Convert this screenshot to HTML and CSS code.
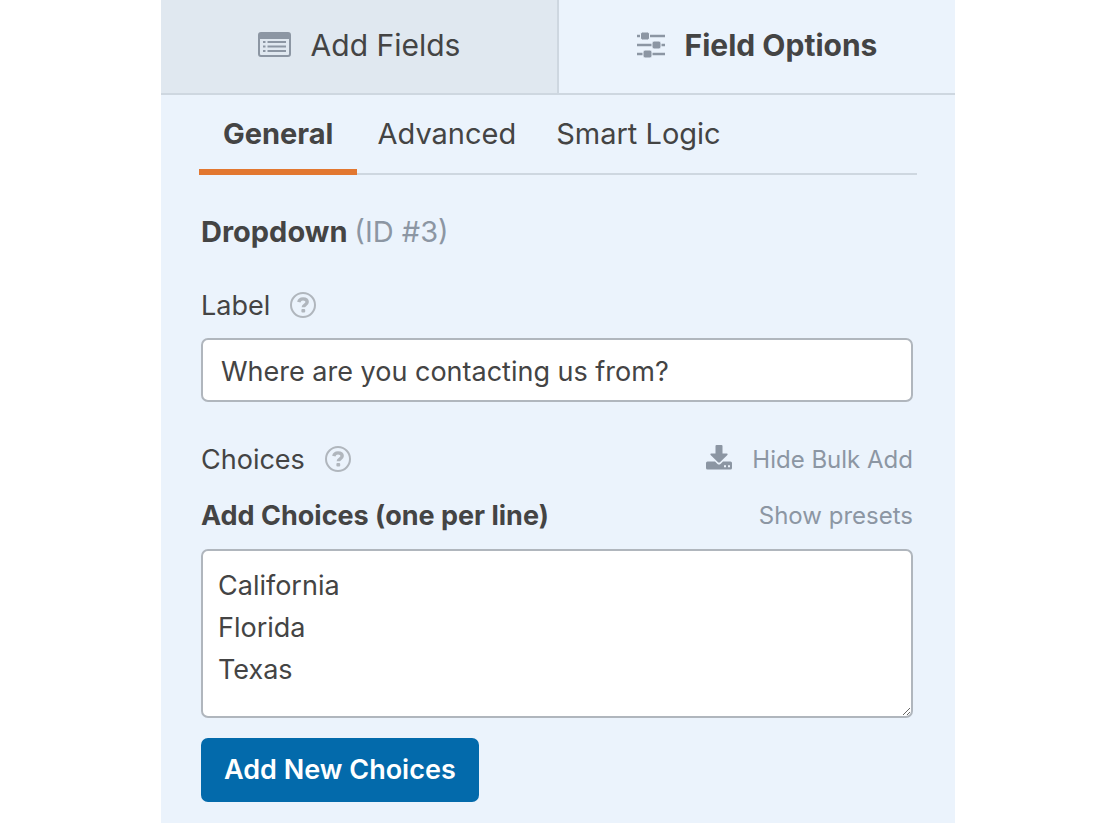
FILE: index.html
```html
<!DOCTYPE html>
<html lang="en">
<head>
<meta charset="utf-8">
<meta name="viewport" content="width=device-width, initial-scale=1">
<title>Field Options</title>
<link rel="stylesheet" href="styles.css">
</head>
<body>
<div class="panel">
  <nav class="tabs">
    <a class="tab" href="#add-fields">
      <svg class="tab-icon" width="33" height="26" viewBox="0 0 33 26">
        <rect x="1" y="1" width="31" height="23" rx="2" fill="none" stroke="#8c96a3" stroke-width="2"/>
        <path d="M1 2h31v5H1z" fill="#8c96a3"/>
        <path d="M5 10h2.500M5 14.500h2.500M5 19h2.500M9.500 10H28M9.500 14.500H28M9.500 19H28" stroke="#8c96a3" stroke-width="2.200"/>
      </svg>
      Add Fields
    </a>
    <a class="tab active" href="#field-options">
      <svg class="tab-icon" width="28" height="28" viewBox="0 0 28 28">
        <path d="M0 5h28M0 14h28M0 23h28" stroke="#8c96a3" stroke-width="2.400"/>
        <g fill="#8c96a3" stroke="#ebf3fc">
          <rect x="3.500" y="1" width="9" height="8" rx="2"/>
          <rect x="15" y="10" width="9" height="8" rx="2"/>
          <rect x="6" y="19" width="9" height="8" rx="2"/>
        </g>
      </svg>
      Field Options
    </a>
  </nav>

  <div class="content">
    <nav class="subtabs">
      <a class="subtab active" href="#general">General</a>
      <a class="subtab" href="#advanced">Advanced</a>
      <a class="subtab" href="#smart-logic">Smart Logic</a>
    </nav>

    <form class="options">
      <h1 class="field-title">Dropdown <span>(ID #3)</span></h1>

      <div class="row label-row">
        <label for="field-label">Label</label>
        <svg class="help" width="26" height="26" viewBox="0 0 26 26">
          <circle cx="13" cy="13" r="12" fill="none" stroke="#b0b6bd" stroke-width="2"/>
          <path d="M8.800 10.200C9.300 7.800 10.900 6.900 13 6.900c2.600 0 4.200 1.400 4.200 3.200 0 2.700-3.900 2.700-3.900 5.200" fill="none" stroke="#b0b6bd" stroke-width="3.400"/>
          <rect x="11.400" y="17" width="3.800" height="3.600" rx="1" fill="#b0b6bd"/>
        </svg>
      </div>
      <input class="text-input" type="text" id="field-label" value="Where are you contacting us from?">

      <div class="row choices-row">
        <span>Choices</span>
        <svg class="help" width="26" height="26" viewBox="0 0 26 26">
          <circle cx="13" cy="13" r="12" fill="none" stroke="#b0b6bd" stroke-width="2"/>
          <path d="M8.800 10.200C9.300 7.800 10.900 6.900 13 6.900c2.600 0 4.200 1.400 4.200 3.200 0 2.700-3.900 2.700-3.900 5.200" fill="none" stroke="#b0b6bd" stroke-width="3.400"/>
          <rect x="11.400" y="17" width="3.800" height="3.600" rx="1" fill="#b0b6bd"/>
        </svg>
        <a class="side-link" href="#bulk-add">
          <svg class="download" width="26" height="25" viewBox="0 0 26 25">
            <path d="M10.500 0h5a1 1 0 0 1 1 1v7.500h4.500q1.200.3.400 1.400l-7.400 7.400q-1 .8-2 0L4.600 9.900q-.8-1.100.4-1.400h4.500V1a1 1 0 0 1 1-1z" fill="#8c96a3"/>
            <path d="M1.500 16.500H9l2.500 2.400q1.500 1.200 3 0l2.500-2.400h7.500q1.500 0 1.500 1.500v5q0 1.500-1.500 1.500h-23Q0 24.500 0 23v-5q0-1.500 1.500-1.500z" fill="#8c96a3"/>
            <path d="M18 20.200h2v2h-2zM22 20.200h2v2h-2z" fill="#ebf3fc"/>
          </svg>
          Hide Bulk Add
        </a>
      </div>

      <div class="row bulk-row">
        <label for="choices">Add Choices (one per line)</label>
        <a class="side-link" href="#presets">Show presets</a>
      </div>
      <textarea class="choices-input" id="choices">California
Florida
Texas</textarea>

      <button class="add-button" type="button">Add New Choices</button>
    </form>
  </div>
</div>
</body>
</html>
```
FILE: styles.css
```css
* {
  box-sizing: border-box;
}

body {
  margin: 0;
  background: #fff;
  color: #444;
  font-family: Inter, "Liberation Sans", sans-serif;
  font-size: 27px;
  line-height: 40px;
}

a {
  color: inherit;
  text-decoration: none;
}

.panel {
  max-width: 794px;
  min-height: 100vh;
  margin: 0 auto;
  background: #ebf3fc;
}

.tabs {
  display: flex;
  border-bottom: 2px solid #ced7e0;
}

.tab {
  flex: 1;
  display: flex;
  align-items: center;
  justify-content: center;
  gap: 20px;
  padding: 25px 0 28px;
  background: #e0e8f0;
  border-right: 2px solid #ced7e0;
  box-sizing: content-box;
  font-size: 30px;
}

.tab.active {
  background: #ebf3fc;
  border-right: none;
  font-weight: 700;
}

.content {
  padding: 0 38px 20px;
}

.subtabs {
  display: flex;
  border-bottom: 2px solid #ced7e0;
}

.subtab {
  padding: 19px 20px;
  margin-bottom: -2px;
  font-size: 29px;
}

.subtab.active {
  padding: 19px 24px 15px;
  border-bottom: 6px solid #e27730;
  font-weight: 700;
}

.options {
  padding: 37px 4px 0 2px;
}

.field-title {
  margin: 0;
  font-size: 29px;
  font-weight: 700;
}

.field-title span {
  color: #8c96a3;
  font-weight: 400;
}

.row {
  display: flex;
  align-items: center;
}

.help {
  margin: 0 0 2px 20px;
}

.side-link {
  display: flex;
  align-items: center;
  gap: 20px;
  margin-left: auto;
  color: #8c96a3;
  font-size: 24px;
}

.download {
  margin-bottom: 6px;
}

.label-row {
  margin: 34px 0 12px;
}

.choices-row {
  margin-top: 38px;
}

.bulk-row {
  margin: 16px 0 13px;
}

.bulk-row label {
  font-weight: 700;
}

.text-input,
.choices-input {
  display: block;
  width: 100%;
  border: 2px solid #b0b6bd;
  border-radius: 7px;
  background: #fff;
  color: #444;
  font: inherit;
}

.text-input {
  height: 64px;
  padding: 2px 18px 0;
}

.choices-input {
  height: 169px;
  padding: 14px 15px;
  line-height: 42px;
  resize: vertical;
}

.add-button {
  display: block;
  margin-top: 20px;
  padding: 12px 23px;
  border: none;
  border-radius: 7px;
  background: #036aab;
  color: #fff;
  font: inherit;
  font-weight: 600;
  cursor: pointer;
}
```
